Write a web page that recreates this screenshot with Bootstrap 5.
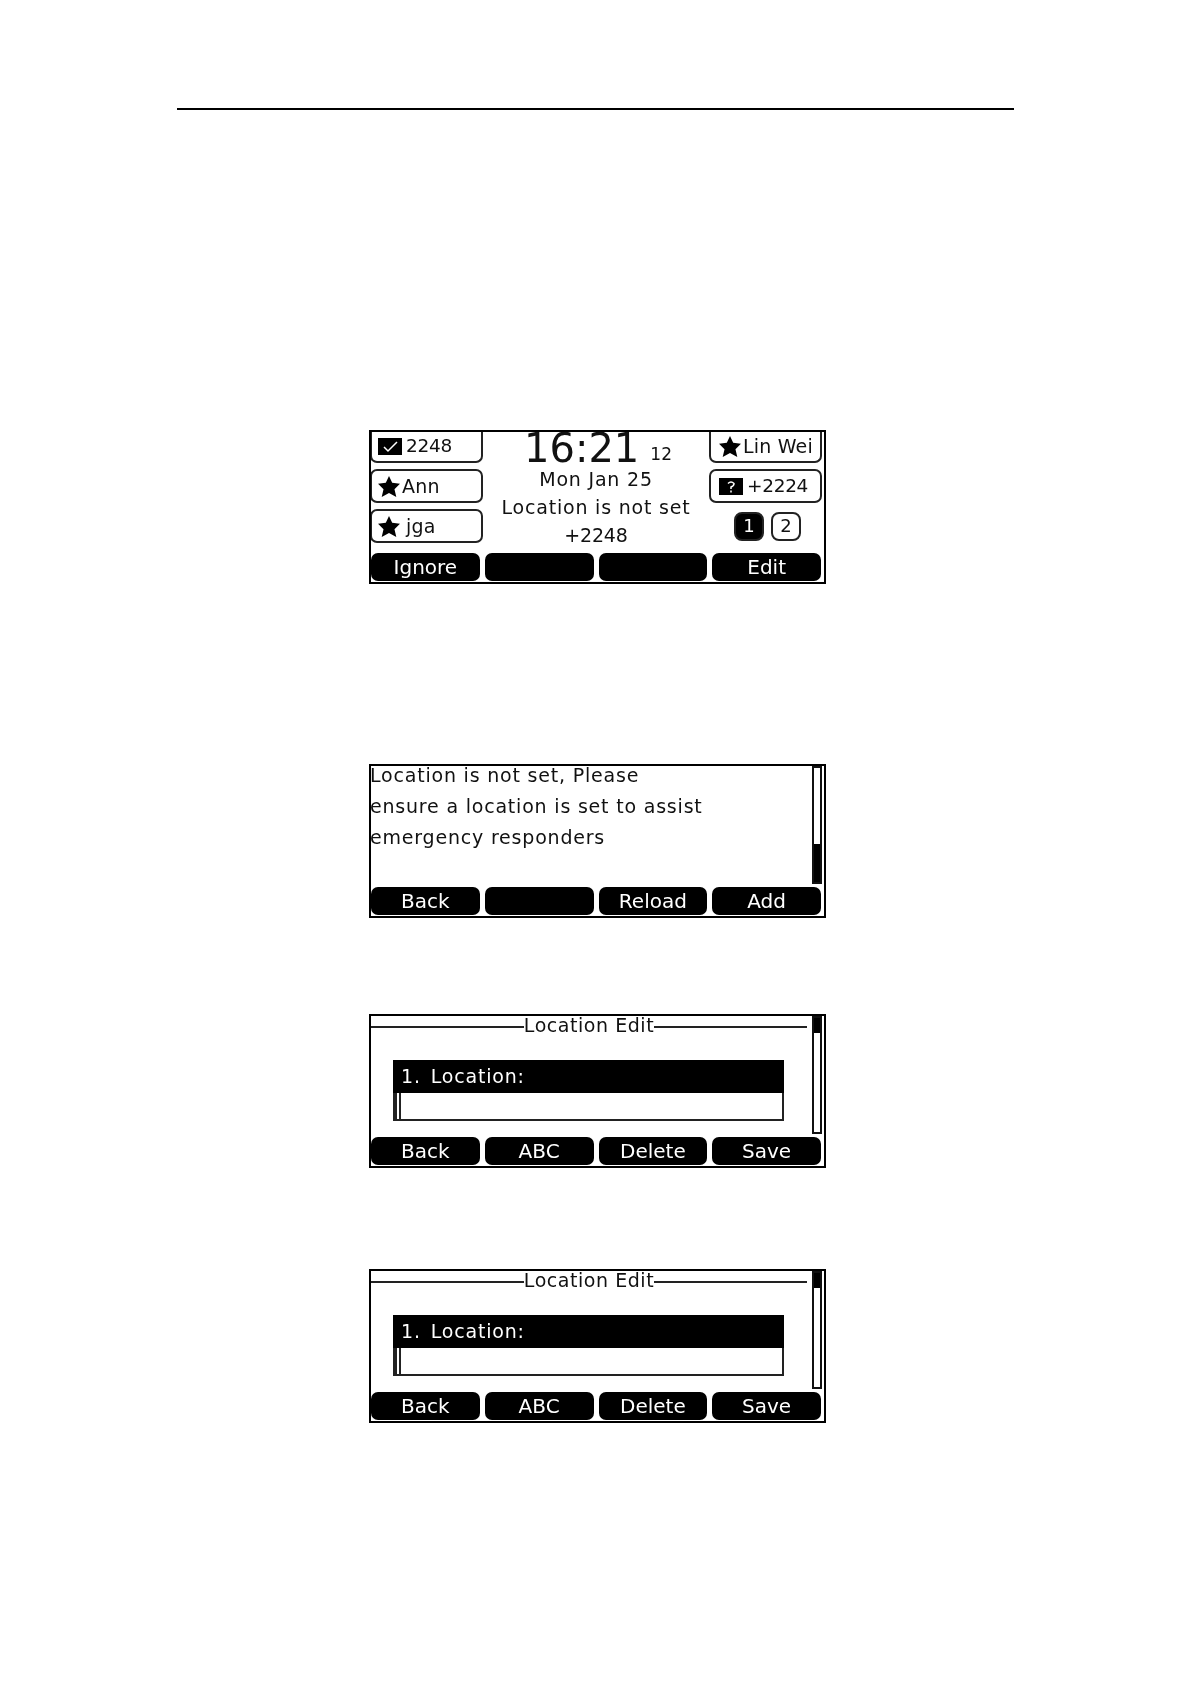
<!DOCTYPE html>
<html lang="en">
<head>
<meta charset="utf-8">
<title>Location Edit</title>
<link href="https://cdn.jsdelivr.net/npm/bootstrap@5.3.0/dist/css/bootstrap.min.css" rel="stylesheet">
<style>
html,body{background:#fff;margin:0}
.sheet{width:1191px;height:1684px;padding-top:108px;overflow:hidden}
.head-rule{width:837px;height:2px;background:#000;margin:0 0 0 177px}
.lcd{width:457px;height:154px;margin-left:369px;border:2px solid #000;background:#fff;color:#111;font-family:"DejaVu Sans",sans-serif;font-size:19px;letter-spacing:.8px;line-height:1;overflow:hidden;filter:blur(.4px)}
.lcd-a{margin-top:320px}
.lcd-b{margin-top:180px}
.lcd-c{margin-top:96px}
.lcd-d{margin-top:101px}
.lcd-top{height:121px;min-height:121px}
.softrow{gap:5px;height:29px;padding:0 3px 1px 0}
.softkey{flex:1 1 0;background:#000;color:#fff;height:28px;border-radius:7px;font-size:20px;letter-spacing:0}
.linecol{width:113px;gap:6px;margin-left:-1px}
.linecol-right{width:113px;gap:6px;margin-right:2px}
.linekey{height:34px;border:2px solid #222;border-radius:7px;padding-left:6px;font-size:19px;letter-spacing:.2px;gap:2px}
.linekey-cut{height:31px;border-top:0;border-radius:0 0 7px 7px}
.num-text{font-size:18.5px;letter-spacing:-.3px;margin-left:2px}
.ico-star{width:22px;height:21px;flex:none}
.ico-box{width:24px;height:17px;flex:none}
.nudge{margin-left:2px}
.midcol{flex:1 1 0;text-align:center}
.clock{height:32px;gap:11px;padding-left:4px}
.clock-big{font-size:40px;line-height:32px;letter-spacing:0;height:32px}
.clock-small{font-size:17px;line-height:20px;letter-spacing:0}
.midline{height:28px}
.mid-first{margin-top:6px}
.num-line{letter-spacing:-.2px}
.pager{gap:7px;height:34px;padding-left:25px}
.pg{width:30px;height:29px;border:2px solid #222;border-radius:8px;font-size:18px;letter-spacing:0}
.pg-on{background:#000;color:#fff}
.msgwrap{flex:1 1 0;margin-left:-1px}
.msgline{height:31px;white-space:nowrap}
.msg-first{margin-top:-6px}
.vbar{width:10px;height:118px;margin:0 2px 0 5px;border:2px solid #111;flex:none}
.vbar-thumb{background:#000}
.thumb-low{height:38px}
.thumb-top{height:15px}
.edit-main{flex:1 1 0;min-width:0}
.titlebar{height:19px}
.title-rule{height:2px;background:#222;margin-top:3px}
.title-text{white-space:nowrap;letter-spacing:.55px}
.field{margin:25px 0 0 22px;width:391px}
.field-head{height:33px;background:#000;color:#fff;padding-left:8px;gap:10px}
.field-input{height:28px;border:2px solid #222;border-top:0}
.caret-mark{width:6px;border-left:2px solid #222;border-right:2px solid #222;height:100%}
</style>
</head>
<body>
<div class="sheet">
  <div class="head-rule"></div>

  <div class="lcd lcd-a d-flex flex-column">
    <div class="lcd-top d-flex">
      <div class="linecol d-flex flex-column">
        <div class="linekey linekey-cut d-flex align-items-center">
          <svg class="ico-box" viewBox="0 0 24 17"><rect width="24" height="17" fill="#000"/><path d="M6 9l4 4 9-9" fill="none" stroke="#fff" stroke-width="1.5"/></svg><span class="num-text">2248</span>
        </div>
        <div class="linekey d-flex align-items-center">
          <svg class="ico-star" viewBox="0 0 24 23"><polygon points="12,0 15.500,7.500 24,8.500 18,14.500 20,23 12,18.500 4,23 6,14.500 0,8.500 8.500,7.500" fill="#000"/></svg><span>Ann</span>
        </div>
        <div class="linekey d-flex align-items-center">
          <svg class="ico-star" viewBox="0 0 24 23"><polygon points="12,0 15.500,7.500 24,8.500 18,14.500 20,23 12,18.500 4,23 6,14.500 0,8.500 8.500,7.500" fill="#000"/></svg><span class="ms-1">jga</span>
        </div>
      </div>
      <div class="midcol">
        <div class="clock d-flex justify-content-center align-items-end">
          <span class="clock-big">16:21</span><span class="clock-small">12</span>
        </div>
        <div class="midline mid-first">Mon Jan 25</div>
        <div class="midline">Location is not set</div>
        <div class="midline num-line">+2248</div>
      </div>
      <div class="linecol-right d-flex flex-column">
        <div class="linekey linekey-cut d-flex align-items-center">
          <svg class="ico-star nudge" viewBox="0 0 24 23"><polygon points="12,0 15.500,7.500 24,8.500 18,14.500 20,23 12,18.500 4,23 6,14.500 0,8.500 8.500,7.500" fill="#000"/></svg><span>Lin Wei</span>
        </div>
        <div class="linekey d-flex align-items-center">
          <svg class="ico-box nudge" viewBox="0 0 24 17"><rect width="24" height="17" fill="#000"/><path d="M9 5.500q3-3 6 0q0 2.500-3 3.500v2M12 12.500v2" fill="none" stroke="#fff" stroke-width="1.500"/></svg><span class="num-text nudge">+2224</span>
        </div>
        <div class="pager d-flex align-items-center">
          <div class="pg pg-on d-flex align-items-center justify-content-center">1</div>
          <div class="pg d-flex align-items-center justify-content-center">2</div>
        </div>
      </div>
    </div>
    <div class="softrow d-flex">
      <div class="softkey d-flex align-items-center justify-content-center">Ignore</div>
      <div class="softkey"></div>
      <div class="softkey"></div>
      <div class="softkey d-flex align-items-center justify-content-center">Edit</div>
    </div>
  </div>

  <div class="lcd lcd-b d-flex flex-column">
    <div class="lcd-top d-flex">
      <div class="msgwrap">
        <div class="msgline msg-first d-flex align-items-center">Location is not set, Please</div>
        <div class="msgline d-flex align-items-center">ensure a location is set to assist</div>
        <div class="msgline d-flex align-items-center">emergency responders</div>
      </div>
      <div class="vbar d-flex flex-column justify-content-end"><div class="vbar-thumb thumb-low"></div></div>
    </div>
    <div class="softrow d-flex">
      <div class="softkey d-flex align-items-center justify-content-center">Back</div>
      <div class="softkey"></div>
      <div class="softkey d-flex align-items-center justify-content-center">Reload</div>
      <div class="softkey d-flex align-items-center justify-content-center">Add</div>
    </div>
  </div>

  <div class="lcd lcd-c d-flex flex-column">
    <div class="lcd-top d-flex">
      <div class="edit-main">
        <div class="titlebar d-flex align-items-center">
          <div class="title-rule flex-grow-1"></div><div class="title-text">Location Edit</div><div class="title-rule flex-grow-1"></div>
        </div>
        <div class="field">
          <div class="field-head d-flex align-items-center"><span>1.</span><span>Location:</span></div>
          <div class="field-input"><div class="caret-mark"></div></div>
        </div>
      </div>
      <div class="vbar d-flex flex-column"><div class="vbar-thumb thumb-top"></div></div>
    </div>
    <div class="softrow d-flex">
      <div class="softkey d-flex align-items-center justify-content-center">Back</div>
      <div class="softkey d-flex align-items-center justify-content-center">ABC</div>
      <div class="softkey d-flex align-items-center justify-content-center">Delete</div>
      <div class="softkey d-flex align-items-center justify-content-center">Save</div>
    </div>
  </div>

  <div class="lcd lcd-d d-flex flex-column">
    <div class="lcd-top d-flex">
      <div class="edit-main">
        <div class="titlebar d-flex align-items-center">
          <div class="title-rule flex-grow-1"></div><div class="title-text">Location Edit</div><div class="title-rule flex-grow-1"></div>
        </div>
        <div class="field">
          <div class="field-head d-flex align-items-center"><span>1.</span><span>Location:</span></div>
          <div class="field-input"><div class="caret-mark"></div></div>
        </div>
      </div>
      <div class="vbar d-flex flex-column"><div class="vbar-thumb thumb-top"></div></div>
    </div>
    <div class="softrow d-flex">
      <div class="softkey d-flex align-items-center justify-content-center">Back</div>
      <div class="softkey d-flex align-items-center justify-content-center">ABC</div>
      <div class="softkey d-flex align-items-center justify-content-center">Delete</div>
      <div class="softkey d-flex align-items-center justify-content-center">Save</div>
    </div>
  </div>
</div>
<script src="https://cdn.jsdelivr.net/npm/bootstrap@5.3.0/dist/js/bootstrap.bundle.min.js"></script>
</body>
</html>
